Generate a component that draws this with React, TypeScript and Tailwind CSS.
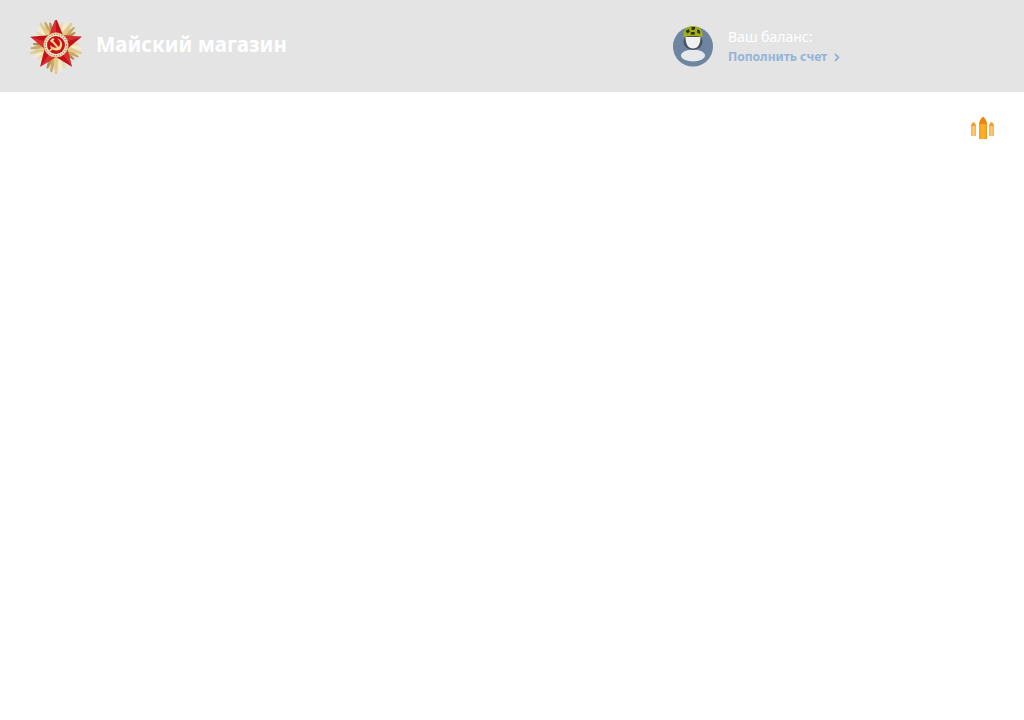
import React from "react";

const polar = (r: number, a: number) => `${(r * Math.sin(a)).toFixed(2)},${(-r * Math.cos(a)).toFixed(2)}`;

function Medal() {
  const star: string[] = [];
  for (let i = 0; i < 10; i++) star.push(polar(i % 2 === 0 ? 27 : 12, (Math.PI * i) / 5));
  const dirs = [0, 1, 2, 3, 4].map((i) => Math.PI + (2 * Math.PI * i) / 5);
  const rays: { p: string; f: string }[] = [];
  dirs.forEach((d, i) => {
    const len = i === 0 ? 29 : 27;
    [
      [-0.36, len - 4, "#ecd9a2"],
      [0.36, len - 4, "#b38d4a"],
      [-0.18, len - 1.5, "#f6ebc6"],
      [0.18, len - 1.5, "#c9a864"],
      [0, len, "#e3c98a"],
    ].forEach(([o, l, f]) => {
      const a = d + (o as number);
      rays.push({ p: `${polar(6, a - 0.6)} ${polar(l as number, a - 0.035)} ${polar(l as number, a + 0.035)} ${polar(6, a + 0.6)}`, f: f as string });
    });
  });
  const facets = [0, 1, 2, 3, 4].map((i) => {
    const a = (2 * Math.PI * i) / 5;
    return `0,0 ${polar(27, a)} ${polar(12, a - Math.PI / 5)}`;
  });
  return (
    <svg width="56" height="58" viewBox="-28 -25 56 58" className="mt-[6px] shrink-0">
      {rays.map((r, i) => (
        <polygon key={i} points={r.p} fill={r.f} />
      ))}
      <polygon points={star.join(" ")} fill="#c3121a" />
      {facets.map((f, i) => (
        <polygon key={i} points={f} fill="#e03a3d" opacity="0.75" />
      ))}
      <circle r="12.2" fill="#f3ead0" stroke="#d6b466" strokeWidth="0.8" />
      <circle r="10.6" fill="none" stroke="#8d6f3a" strokeWidth="1.2" strokeDasharray="1.3 1.2" opacity="0.75" />
      <circle r="9" fill="#cb101a" />
      <path d="M1 -6.500 C6 -5.500 7.500 0 5 3.500 C3 6 -1 6.200 -3.500 4.500 L-6 6.800 L-7 5.600 L-4.700 3.300 C-5.600 2 -5.800 1 -5.800 0 C-3.500 3 1 3.500 3 1.500 C5 -1 4 -4.500 1 -6.500Z" fill="#f1d98e" />
      <path d="M-6 -4.500 L-3 -7 L-1.500 -5.500 L-2.800 -4.300 L4.500 4 L3 5.300 L-4 -2.800 L-4.800 -2.500Z" fill="#f1d98e" />
    </svg>
  );
}

function Avatar() {
  return (
    <svg width="40" height="41" viewBox="0 0 40 41" className="shrink-0">
      <circle cx="20" cy="20.500" r="20" fill="#6d85a0" />
      <ellipse cx="20" cy="29.500" rx="12" ry="6" fill="#e6e8ea" />
      <ellipse cx="20" cy="15.500" rx="9.500" ry="8.500" fill="#48505a" />
      <path d="M12.500 11 L27.500 11 C27.500 18 25 22.500 20 22.500 C15 22.500 12.500 18 12.500 11Z" fill="#f0f0f0" />
      <path d="M10.500 11 C10 5 12 0 20 0 C28 0 30 5 29.500 11 C25 9.500 15 9.500 10.500 11Z" fill="#a0ae20" />
      <path d="M12.500 5 l3 -2 l1.500 2.500 l-2.500 2Z M18.500 1 l3.500 0 l0 2.500 l-3.500 .5Z M24.500 3 l2.500 2 l0 3 l-3 -1.500Z M18 6 l3.500 0 l.5 2.500 l-4.500 0Z" fill="#2c3312" />
    </svg>
  );
}

function Bullets() {
  return (
    <svg width="24" height="24" viewBox="0 0 24 24" className="shrink-0">
      <defs>
        <linearGradient id="side" x1="0" y1="0" x2="1" y2="0">
          <stop offset="0" stopColor="#fab345" />
          <stop offset="0.5" stopColor="#fdca78" />
          <stop offset="1" stopColor="#f9b045" />
        </linearGradient>
        <linearGradient id="mid" x1="0" y1="0" x2="1" y2="0">
          <stop offset="0" stopColor="#fb9d12" />
          <stop offset="0.5" stopColor="#ffb62e" />
          <stop offset="1" stopColor="#f79a10" />
        </linearGradient>
      </defs>
      <rect x="1" y="10" width="5" height="10" fill="url(#side)" />
      <path d="M1 10 C1 8.500 2.200 7 3.500 6 C4.800 7 6 8.500 6 10Z" fill="#f59b24" />
      <rect x="19" y="10" width="5" height="10" fill="url(#side)" />
      <path d="M19 10 C19 8.500 20.200 7 21.500 6 C22.800 7 24 8.500 24 10Z" fill="#f59b24" />
      <rect x="9" y="8" width="8" height="15" fill="url(#mid)" />
      <path d="M9 8 C9 5 11 2 13 0.500 C15 2 17 5 17 8Z" fill="#ee8411" />
    </svg>
  );
}

export default function App() {
  return (
    <div className="min-h-[720px] bg-white">
      <header className="flex h-[92px] items-center bg-[#e4e4e4]">
        <div className="flex w-[673px] items-center pl-[28px]">
          <Medal />
          <span className="ml-[12px] -mt-[3px] text-[20.5px] font-bold leading-none text-white [font-family:'Noto_Sans',sans-serif]">
            Майский магазин
          </span>
        </div>
        <Avatar />
        <div className="ml-[15px] flex flex-col [font-family:'Noto_Sans',sans-serif]">
          <span className="-mt-[1px] text-[14px] leading-[20px] text-white">Ваш баланс:</span>
          <span className="mt-[2px] flex items-center text-[12.100px] font-bold leading-[16px] text-[#92b4da]">
            Пополнить счет
            <svg width="6" height="9" viewBox="0 0 6 9" className="ml-[7px] mt-[1px]">
              <path d="M1 1 L4.500 4.500 L1 8" fill="none" stroke="#92b4da" strokeWidth="1.8" />
            </svg>
          </span>
        </div>
      </header>
      <div className="flex justify-end pr-[30px] pt-[24px]">
        <Bullets />
      </div>
    </div>
  );
}
